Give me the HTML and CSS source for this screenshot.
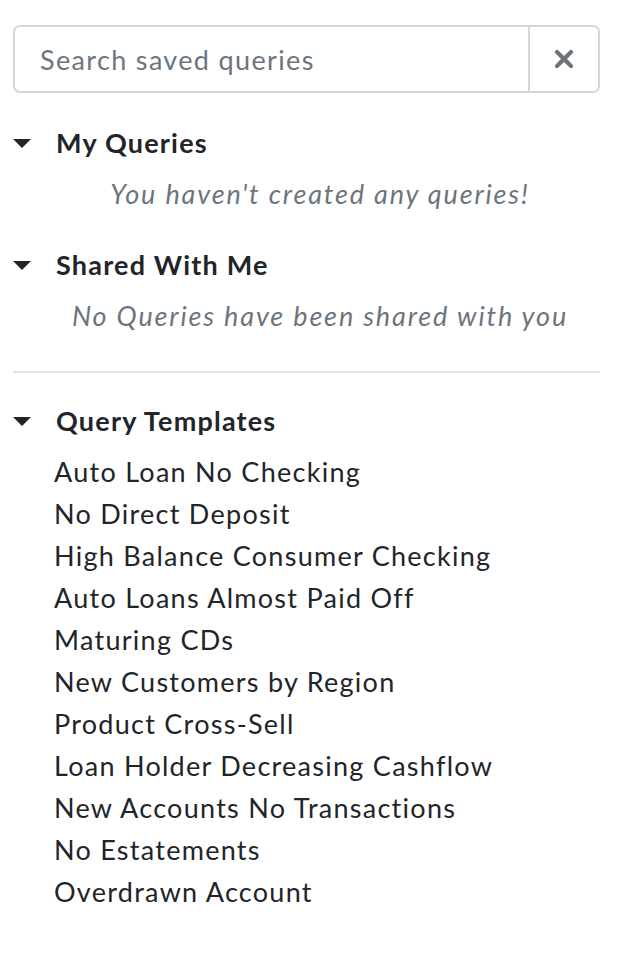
FILE: index.html
```html
<!DOCTYPE html>
<html lang="en">
<head>
	<meta http-equiv="Content-Type" content="text/html;charset=UTF-8">
	<link rel="stylesheet" href="styles.css">
</head>
<body>

<div class="queries">
	<div class="search">
		<input class="search__input" type="text" placeholder="Search saved queries">
		<button class="search__clear" type="button">
			<svg width="20" height="20" viewBox="0 0 20 20">
				<path d="M3 3 L17 17 M17 3 L3 17" stroke="#6c757d" stroke-width="4.2" stroke-linecap="round"/>
			</svg>
		</button>
	</div>

	<div class="section">
		<div class="section__head"><span class="section__caret"></span>My Queries</div>
		<div class="section__empty">You haven't created any queries!</div>
	</div>

	<div class="section section_shared">
		<div class="section__head"><span class="section__caret"></span>Shared With Me</div>
		<div class="section__empty">No Queries have been shared with you</div>
	</div>

	<hr class="queries__divider">

	<div class="section section_templates">
		<div class="section__head"><span class="section__caret"></span>Query Templates</div>
		<ul class="templates">
			<li class="templates__item">Auto Loan No Checking</li>
			<li class="templates__item">No Direct Deposit</li>
			<li class="templates__item">High Balance Consumer Checking</li>
			<li class="templates__item">Auto Loans Almost Paid Off</li>
			<li class="templates__item">Maturing CDs</li>
			<li class="templates__item">New Customers by Region</li>
			<li class="templates__item">Product Cross-Sell</li>
			<li class="templates__item">Loan Holder Decreasing Cashflow</li>
			<li class="templates__item">New Accounts No Transactions</li>
			<li class="templates__item">No Estatements</li>
			<li class="templates__item">Overdrawn Account</li>
		</ul>
	</div>
</div>

</body>
</html>
```

FILE: styles.css
```css
body {
	margin: 0;
	padding: 0;
	background: #fff;
	font-family: Lato, "Noto Sans", sans-serif;
	color: #212529;
}

.queries {
	width: 587px;
	padding: 25px 0 0 13px;
}

.search {
	display: flex;
	box-sizing: border-box;
	height: 68px;
	border: 2px solid #d3d6da;
	border-radius: 7px;
	overflow: hidden;
}

.search__input {
	flex: 1;
	min-width: 0;
	border: none;
	outline: none;
	padding: 0 0 0 25px;
	font-family: inherit;
	font-size: 27px;
	letter-spacing: 1.35px;
	color: #495057;
	background: transparent;
}

.search__input::placeholder {
	color: #6c757d;
}

.search__clear {
	display: flex;
	align-items: center;
	justify-content: center;
	width: 70px;
	padding: 0;
	border: none;
	border-left: 2px solid #d3d6da;
	background: #fff;
	cursor: pointer;
}

.section {
	margin-top: 29px;
}

.section_shared {
	margin-top: 30px;
}

.section_templates {
	margin-top: 27px;
}

.section__head {
	display: flex;
	align-items: center;
	height: 40px;
	font-size: 27px;
	font-weight: bold;
	letter-spacing: 1.2px;
}

.section__caret {
	width: 0;
	height: 0;
	margin: 2px 25px 0 0;
	border-left: 9px solid transparent;
	border-right: 9px solid transparent;
	border-top: 9px solid #212529;
}

.section__empty {
	margin-top: 12px;
	padding-left: 27px;
	line-height: 40px;
	text-align: center;
	font-size: 27px;
	font-style: italic;
	letter-spacing: 1.85px;
	color: #6c757d;
}

.queries__divider {
	margin: 35px 0 0;
	border: none;
	border-top: 2px solid #e3e5e7;
}

.templates {
	list-style: none;
	margin: 11px 0 0;
	padding: 0 0 0 41px;
}

.templates__item {
	line-height: 42px;
	font-size: 27px;
	letter-spacing: 1.27px;
	cursor: pointer;
}
```
